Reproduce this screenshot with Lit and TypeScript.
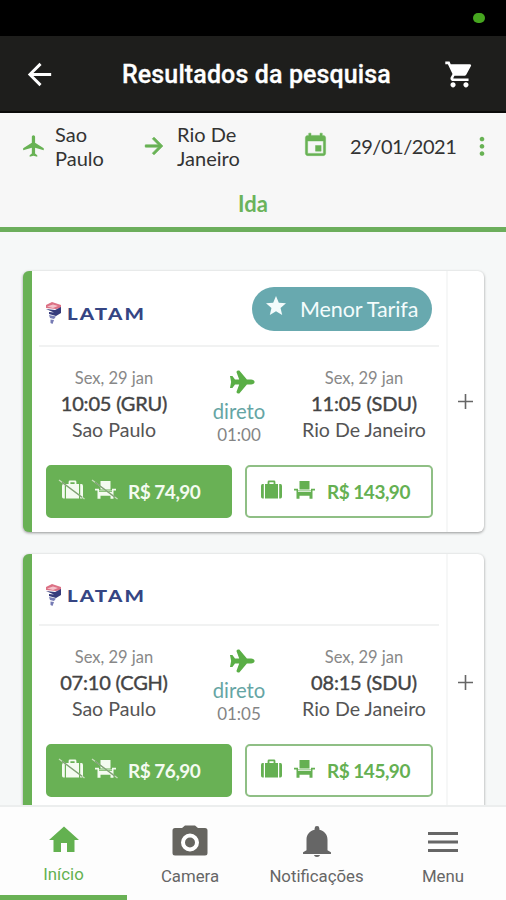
import { LitElement, html, svg, css } from "lit";
import { customElement, property } from "lit/decorators.js";

const P = {
  back: "M20 11H7.83l5.59-5.59L12 4l-8 8 8 8 1.41-1.41L7.83 13H20v-2z",
  forward: "M12 4l-1.41 1.41L16.17 11H4v2h12.17l-5.58 5.59L12 20l8-8z",
  cart: "M7 18c-1.1 0-1.99.9-1.99 2S5.900 22 7 22s2-.9 2-2-.9-2-2-2zM1 2v2h2l3.600 7.590-1.350 2.450c-.16.28-.25.61-.25.960 0 1.100.9 2 2 2h12v-2H7.420c-.14 0-.25-.11-.25-.25l.03-.12.9-1.630h7.450c.75 0 1.410-.41 1.750-1.030l3.580-6.490A1 1 0 0 0 20 4H5.210l-.94-2H1zm16 16c-1.100 0-1.990.9-1.990 2s.89 2 1.990 2 2-.9 2-2-.9-2-2-2z",
  plane: "M21 16v-2l-8-5V3.500c0-.83-.67-1.500-1.500-1.500S10 2.670 10 3.500V9l-8 5v2l8-2.500V19l-2 1.500V22l3.500-1 3.500 1v-1.500L13 19v-5.500l8 2.500z",
  jet: "M12 1.200C10.700 1.200 9.900 2.600 9.900 4.200V7.800L2.200 14.300Q1.600 16.900 3.600 16.700L9.900 14.400V18L6.800 20.200V22.300L12 21.300L17.200 22.300V20.200L14.100 18V14.400L20.400 16.700Q22.400 16.900 21.800 14.300L14.100 7.800V4.200C14.100 2.600 13.300 1.200 12 1.200Z",
  event: "M17 12h-5v5h5v-5zM16 1v2H8V1H6v2H5c-1.110 0-1.990.9-1.990 2L3 19c0 1.100.89 2 2 2h14c1.100 0 2-.9 2-2V5c0-1.100-.9-2-2-2h-1V1h-2zm3 18H5V8h14v11z",
  star: "M12 17.270L18.180 21l-1.640-7.030L22 9.240l-7.190-.61L12 2 9.190 8.630 2 9.240l5.460 4.730L5.820 21z",
  home: "M10 20v-6h4v6h5v-8h3L12 3 2 12h3v8z",
  bell: "M12 22c1.100 0 1.800-.5 2-1.300h-4c.2.8.9 1.300 2 1.300zM19 17.500V10.500c0-3.600-2.200-6-5.400-6.700V3a1.600 1.600 0 0 0-3.200 0v.8C7.200 4.500 5 6.900 5 10.500v7l-2.300 1.300V20h18.600v-1.200z",
  menu: "M2 5.400h20v2H2zM2 11h20v2H2zM2 16.600h20v2H2z",
  more: "M12 8c1.100 0 2-.9 2-2s-.9-2-2-2-2 .9-2 2 .9 2 2 2zm0 2.200c-1.100 0-2 .9-2 2s.9 2 2 2 2-.9 2-2-.9-2-2-2zm0 6.200c-1.100 0-2 .9-2 2s.9 2 2 2 2-.9 2-2-.9-2-2-2z",
};

const icon = (d: string, cls: string) =>
  html`<svg class=${cls} viewBox="0 0 24 24" fill="currentColor"><path d=${d}></path></svg>`;

const slash = (off: boolean) =>
  off
    ? svg`<path d="M-3 0L22.500 19" stroke="#c9dfbf" stroke-width="1.200"></path><path d="M0 2.200L20 17.200" stroke="#7f9f74" stroke-width="1.300"></path>`
    : null;

const bag = (off: boolean) => html`
  <svg class="extra bag" viewBox="0 0 21 20" fill="currentColor">
    <path d="M0 6Q0 4 1.500 4H2.800V18.500H1.500Q0 18.500 0 16.500ZM4 4H6.600V1.900Q6.600.5 8 .5H13Q14.400.5 14.400 1.900V4H17V18.500H4ZM8.400 4H12.600V2.200H8.400ZM18.200 4H19.500Q21 4 21 6V16.500Q21 18.500 19.500 18.500H18.200Z"></path>
    ${slash(off)}
  </svg>`;

const seat = (off: boolean) => html`
  <svg class="extra seat" viewBox="0 0 21 20" fill="currentColor">
    <path d="M5.500 1H15.500V9.400H5.500ZM0 8.800H4V10.600H17V8.800H21V10.500H18.500V18.800H15.500V15.800H5.500V18.800H2.500V10.500H0ZM4 11.300V11.900H17V11.300Z"></path>
    ${slash(off)}
  </svg>`;

interface Flight {
  from: string;
  depart: string;
  arrive: string;
  duration: string;
  light: string;
  full: string;
  lowest?: boolean;
}

const flights: Flight[] = [
  { from: "Sao Paulo", depart: "10:05 (GRU)", arrive: "11:05 (SDU)", duration: "01:00", light: "R$ 74,90", full: "R$ 143,90", lowest: true },
  { from: "Sao Paulo", depart: "07:10 (CGH)", arrive: "08:15 (SDU)", duration: "01:05", light: "R$ 76,90", full: "R$ 145,90" },
];

@customElement("flight-card")
export class FlightCard extends LitElement {
  @property({ attribute: false }) flight!: Flight;

  static styles = css`
    * { box-sizing: border-box; }
    :host { display: block; flex: none; font-family: Lato, sans-serif; }
    .card { display: flex; width: 461px; background: #fff; border-left: 9px solid #69b155; border-radius: 6px; box-shadow: 0 1px 3px rgba(0, 0, 0, .4); }
    .main { width: 416px; padding: 0 7px 14px; border-right: 2px solid #f6f7f7; }
    .more { flex: 1; display: grid; place-items: center; color: #666; }
    .plus { width: 15px; height: 15px; margin: 0 1px 1px 0; }
    .head { height: 72px; display: flex; align-items: center; justify-content: space-between; padding: 11px 7px 0; border-bottom: 2px solid #f1f2f2; }
    .head.tall { height: 76px; padding-top: 0; }
    .brand { display: flex; align-items: center; height: 28px; gap: 6px; margin-top: 10px; }
    .head:not(.tall) .brand { margin-top: 1px; }
    .mark { width: 15px; height: 23px; }
    .name { width: 79px; height: 14px; overflow: visible; margin-top: 2px; }
    .badge { display: flex; align-items: center; width: 180px; height: 44px; margin-top: 1px; padding-left: 12px; border-radius: 22px; background: #68a9af; color: #f4fcfc; font-size: 21.500px; letter-spacing: -.1px; white-space: nowrap; }
    .star { width: 24px; height: 24px; margin: -6px 12px 0 0; }
    .route { display: grid; grid-template-columns: 136px 114px 136px; height: 118px; padding: 20px 7px 0; text-align: center; white-space: nowrap; }
    .date { font-size: 16.500px; line-height: 23px; color: #888; }
    .time { font-size: 20px; line-height: 26px; color: #444; -webkit-text-stroke: .4px #444; letter-spacing: -.2px; }
    .city { font-size: 19.600px; line-height: 28px; color: #555; }
    .mid { display: flex; flex-direction: column; align-items: center; }
    .plane { width: 28px; height: 28px; margin: 1px 0 0 5px; color: #5aae46; transform: rotate(90deg); }
    .direct { font-size: 20.300px; line-height: 26px; color: #65a5a4; margin-top: 2px; }
    .length { font-size: 17px; line-height: 21px; color: #848484; }
    .fares { display: flex; gap: 13px; padding: 0 0 0 7px; }
    .fare { display: flex; align-items: center; height: 53px; border-radius: 5px; border: 2px solid #8fbf85; font: 700 19px Lato, sans-serif; white-space: nowrap; width: 188px; padding-left: 14px; background: #fff; color: #65b052; flex: none; }
    .fare.solid { width: 186px; padding-left: 14px; background: #69b155; border-color: #69b155; color: #f4fbf0; }
    .extra { width: 21px; height: 20px; margin-right: 12px; overflow: visible; flex: none; margin-top: -3px; }
    .price { letter-spacing: -.5px; }
  `;

  render() {
    const f = this.flight;
    return html`<div class="card">
      <div class="main">
        <div class="head ${f.lowest ? "tall" : ""}">
          <div class="brand">
            <svg class="mark" viewBox="0 0 15 23">
              <path fill="#dc7185" d="M0 3L6 0L15 3V6L10 7L0 6Z"></path>
              <path fill="#f4c3cb" d="M1 4.500L7 2.500L12 4L7 6Z"></path>
              <path fill="#363b7c" d="M0 7L9 8L15 5V11L10 14L3 12V10L8 10.500Z"></path>
              <path fill="#767bb4" d="M3 13L10 14.500L8 17L4 16ZM4.500 17.500L8 18L6.500 22L4.500 21Z"></path>
            </svg>
            <svg class="name" viewBox="0 0 79 14">
              <text x="0" y="13" textLength="79" lengthAdjust="spacingAndGlyphs" letter-spacing="1.800" font-family="Lato, sans-serif" font-weight="900" font-size="17" fill="#354583">LATAM</text>
            </svg>
          </div>
          ${f.lowest ? html`<div class="badge">${icon(P.star, "star")}<span>Menor Tarifa</span></div>` : null}
        </div>
        <div class="route">
          <div>
            <div class="date">Sex, 29 jan</div>
            <div class="time">${f.depart}</div>
            <div class="city">${f.from}</div>
          </div>
          <div class="mid">
            ${icon(P.jet, "plane")}
            <div class="direct">direto</div>
            <div class="length">${f.duration}</div>
          </div>
          <div>
            <div class="date">Sex, 29 jan</div>
            <div class="time">${f.arrive}</div>
            <div class="city">Rio De Janeiro</div>
          </div>
        </div>
        <div class="fares">
          <div class="fare solid">${bag(true)}${seat(true)}<span class="price">${f.light}</span></div>
          <div class="fare">${bag(false)}${seat(false)}<span class="price">${f.full}</span></div>
        </div>
      </div>
      <div class="more">
        <svg class="plus" viewBox="0 0 15 15" stroke="currentColor" stroke-width="1.600"><path d="M7.500 0V15M0 7.500H15"></path></svg>
      </div>
    </div>`;
  }
}

@customElement("app-root")
export class AppRoot extends LitElement {
  static styles = css`
    * { box-sizing: border-box; }
    :host { display: flex; flex-direction: column; width: 506px; height: 900px; overflow: hidden; background: #f6f8f8; font-family: Lato, sans-serif; }
    .status { height: 36px; flex: none; background: #000; display: flex; justify-content: flex-end; padding: 13px 21px 0 0; }
    .dot { width: 12px; height: 10px; border-radius: 5px; background: #46a51f; }
    .bar { height: 77px; flex: none; background: #1e1e1c; border-bottom: 2px solid #0b0b0a; display: flex; align-items: center; padding: 2px 0 0 22px; color: #fff; }
    .back { width: 35px; height: 35px; }
    .cart { width: 31px; height: 31px; margin-left: 52px; }
    .title { font: 500 25px Roboto, sans-serif; white-space: nowrap; margin-left: 65px; width: 270px; -webkit-text-stroke: .3px #fff; letter-spacing: .12px; }
    .search { height: 119px; flex: none; background: #f7f7f7; border-bottom: 5px solid #6cae5c; }
    .query { height: 65px; display: flex; align-items: center; padding-left: 21px; color: #333; font-size: 20px; line-height: 24px; }
    .q { flex: none; color: #68b254; width: 26px; height: 26px; }
    .origin { width: 77px; margin-left: 8px; }
    .q.arrow { margin-left: 9px; stroke: currentColor; stroke-width: .9; }
    .dest { width: 100px; margin-left: 10px; }
    .q.cal { width: 27px; height: 27px; margin-left: 25px; stroke: currentColor; stroke-width: .4; }
    .day { margin-left: 21px; width: 105px; font-size: 20px; letter-spacing: -.45px; white-space: nowrap; }
    .q.dots { margin-left: 13px; width: 28px; height: 28px; }
    .tab { text-align: center; font-size: 22px; font-weight: 700; line-height: 30px; color: #6bb35a; padding-top: 11px; }
    .list { flex: 1; min-height: 0; overflow: hidden; display: flex; flex-direction: column; gap: 22px; padding: 39px 0 0 23px; }
    .nav { height: 95px; flex: none; background: #fdfdfd; border-top: 2px solid #eceeee; display: grid; grid-template-columns: 127px 126px 127px 126px; color: #666; font: 16.800px Roboto, sans-serif; }
    .item { display: flex; flex-direction: column; align-items: center; border-bottom: 5px solid transparent; padding-top: 17px; }
    .item span { line-height: 22px; margin-top: 5px; white-space: nowrap; }
    .item.on { color: #63b150; border-color: #69b155; padding-top: 15px; }
    .n { width: 36px; height: 36px; }
  `;

  render() {
    return html`
      <div class="status"><div class="dot"></div></div>
      <div class="bar">${icon(P.back, "back")}<div class="title">Resultados da pesquisa</div>${icon(P.cart, "cart")}</div>
      <div class="search">
        <div class="query">
          ${icon(P.plane, "q")}
          <div class="origin">Sao<br />Paulo</div>
          ${icon(P.forward, "q arrow")}
          <div class="dest">Rio De<br />Janeiro</div>
          ${icon(P.event, "q cal")}
          <div class="day">29/01/2021</div>
          ${icon(P.more, "q dots")}
        </div>
        <div class="tab">Ida</div>
      </div>
      <div class="list">${flights.map((f) => html`<flight-card .flight=${f}></flight-card>`)}</div>
      <div class="nav">
        <div class="item on">${icon(P.home, "n")}<span>Início</span></div>
        <div class="item">
          <svg class="n" viewBox="0 0 36 36">
            <path fill="#666560" d="M3 4H10L13 1.500H23L26 4H33Q35.500 4 35.500 6.500V29Q35.500 31.500 33 31.500H3Q.5 31.500.5 29V6.500Q.5 4 3 4Z"></path>
            <circle cx="18" cy="18.500" r="7" fill="none" stroke="#fff" stroke-width="4"></circle>
          </svg><span>Camera</span>
        </div>
        <div class="item">${icon(P.bell, "n")}<span>Notificações</span></div>
        <div class="item">${icon(P.menu, "n")}<span>Menu</span></div>
      </div>`;
  }
}
